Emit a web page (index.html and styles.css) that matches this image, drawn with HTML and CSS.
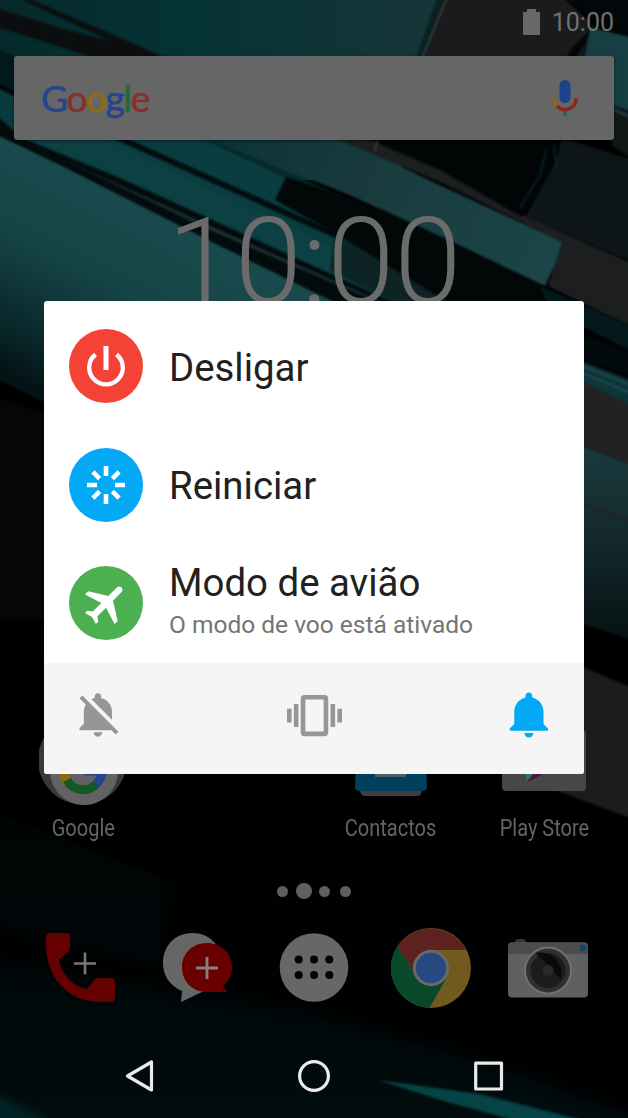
FILE: index.html
```html
<!DOCTYPE html>
<html lang="pt">
  <head>
    <meta charset="UTF-8" />
    <meta name="viewport" content="width=device-width, initial-scale=1.0" />
    <title>Menu desligar</title>
    <link rel="stylesheet" href="styles.css">
  </head>
  <body>
    <div class="phone">
      <!-- wallpaper -->
      <svg class="wallpaper" viewBox="0 0 628 1118" preserveAspectRatio="none">
        <defs>
          <linearGradient id="top" x1="0" y1="0" x2="1" y2="0">
            <stop offset="0" stop-color="#06292b" />
            <stop offset="0.4" stop-color="#053335" />
            <stop offset="1" stop-color="#173538" />
          </linearGradient>
          <linearGradient id="teal" gradientUnits="userSpaceOnUse" x1="180" y1="170" x2="60" y2="400">
            <stop offset="0" stop-color="#1b4d50" />
            <stop offset="0.5" stop-color="#174547" />
            <stop offset="0.8" stop-color="#0a2b2e" />
            <stop offset="1" stop-color="#041416" />
          </linearGradient>
          <linearGradient id="strip" gradientUnits="userSpaceOnUse" x1="220" y1="140" x2="540" y2="280">
            <stop offset="0" stop-color="#0b3437" />
            <stop offset="0.4" stop-color="#193a3d" />
            <stop offset="1" stop-color="#1b4548" />
          </linearGradient>
          <linearGradient id="right" x1="0" y1="0" x2="0" y2="1">
            <stop offset="0" stop-color="#1b3b3f" />
            <stop offset="0.5" stop-color="#14292c" />
            <stop offset="1" stop-color="#071113" />
          </linearGradient>
          <linearGradient id="low" x1="0" y1="0" x2="0" y2="1">
            <stop offset="0" stop-color="#000405" />
            <stop offset="0.6" stop-color="#000809" />
            <stop offset="1" stop-color="#000c0d" />
          </linearGradient>
          <filter id="soft" color-interpolation-filters="sRGB"><feGaussianBlur stdDeviation="1.2" /></filter>
          <filter id="softer" color-interpolation-filters="sRGB"><feGaussianBlur stdDeviation="5" /></filter>
        </defs>
        <rect width="628" height="1118" fill="#000" />
        <path d="M0 0H450L420 60L400 180H0z" fill="url(#top)" />
        <g filter="url(#soft)">
          <path d="M-5 8L60 28L110 41L22 0H32L128 41L170 60H100L-5 26z" fill="#0b0e0e" />
          <path d="M-5 48L20 58V95L-5 85z" fill="#02191b" />
          <path d="M-5 85L20 95V150L-5 120z" fill="#083a3d" />
          <path d="M-5 82L16 92V97L-5 87z" fill="#020606" />
          <path d="M20 138H210L345 200L420 330L360 320L0 130z" fill="#093d40" />
          <path d="M18 138H100L350 255V290L200 220z" fill="#0c4043" />
          <path d="M112 138H126L345 236L335 238z" fill="#020c0d" />
          <path d="M205 140H216L345 198L340 204z" fill="#06292c" />
        </g>
        <path d="M0 134L120 190L250 252L360 301L380 420H0z" fill="url(#teal)" />
        <g filter="url(#soft)">
          <path d="M-5 114L22 138L120 178L230 228L410 310H350L210 241L60 165L-5 134z" fill="#030b0c" />
          <path d="M60 158L210 226L400 310H396L210 230z" fill="#1b3335" />
          <path d="M335 236L400 262L470 305H400L330 270z" fill="#0e2324" />
          <path d="M286 177L345 196L440 235L590 310H460L340 236L275 200z" fill="#020708" />
          <path d="M210 140H345L450 190L565 243L545 286L440 236L345 193z" fill="url(#strip)" />
          <path d="M334 138H368L440 168L530 218L633 264V328L548 286L562 242L440 182z" fill="#1c1e1f" />
          <path d="M366 138H562L550 180L522 217L440 170z" fill="#010506" />
          <path d="M562 138L633 160V262L526 217L550 180z" fill="#0e1518" />
          <path d="M554 145L556 165L528 215M546 150L540 175L520 208" fill="none" stroke="#0d3236" stroke-width="1.2" />
          <path d="M378 140L374 151" stroke="#476264" stroke-width="1" />
          <path d="M445 -5H560L590 22L582 60H420z" fill="#1a1b1c" />
          <path d="M438 -5H445L424 58H416z" fill="#0b2022" />
          <path d="M446 0L423 56" stroke="#50605f" stroke-width="1" />
          <path d="M560 -5H633V38L600 24z" fill="#020809" />
          <path d="M590 27L633 38V112L612 105L584 58z" fill="#173f43" />
          <path d="M590 30L570 50L567 58H576L588 38z" fill="#020506" />
          <path d="M612 104L633 113V160L612 145z" fill="#121718" />
          <path d="M612 109L633 118" stroke="#1d4b50" stroke-width="2" />
        </g>
        <!-- right edge, beside the dialog -->
        <g filter="url(#soft)">
          <path d="M540 286L633 327V352L550 310z" fill="#04191b" />
          <path d="M570 330L633 354V377L570 355z" fill="#020a0c" />
          <path d="M570 357L633 381V406L570 382z" fill="#0f343a" />
          <path d="M570 361L633 386M570 368L633 394" stroke="#27666d" stroke-width="1" />
          <path d="M570 376L633 406V466L570 442z" fill="#222223" />
          <path d="M570 442L633 466V640L570 620z" fill="url(#right)" />
          <path d="M570 500L633 522" stroke="#231f20" stroke-width="2" />
          <path d="M570 662L633 688V819L555 790z" fill="#1c1c1d" />
          <!-- left edge -->
          <path d="M-5 385L50 412V620H-5z" fill="#050606" />
          <path d="M-5 378L50 405V416L-5 396z" fill="#000" />
        </g>
        <path d="M0 815L220 900L628 1030V1118H0z" fill="url(#low)" />
        <g filter="url(#softer)">
          <path d="M170 860L640 860V1118L480 1060L300 1010L-10 960V925L160 965z" fill="#000102" />
          <path d="M-10 1092L60 1125H-10z" fill="#002426" />
        </g>
        <path d="M378 1080L480 1094L590 1122H520L440 1100z" fill="#054346" filter="url(#soft)" />
      </svg>

      <div class="status-bar">
        <svg class="battery" viewBox="0 0 17 26">
          <path d="M0 3H4V0H13V3H17V26H0z" fill="#686868" />
        </svg>
        <span>10:00</span>
      </div>

      <div class="search">
        <div class="logo">
          <span class="blue">G</span><span class="red">o</span><span class="yellow">o</span><span class="blue">g</span><span class="green">l</span><span class="red">e</span>
        </div>
        <svg class="mic" viewBox="0 0 26 36">
          <path d="M13 30V36" stroke="#236b35" stroke-width="3.6" />
          <path d="M2 18.500A11 11 0 0 0 5.500 26.500" fill="none" stroke="#8f6c08" stroke-width="3.500" />
          <path d="M5 26A11 11 0 0 0 24 18" fill="none" stroke="#852b23" stroke-width="3.500" />
          <rect x="7.500" y="0" width="11" height="23" rx="5.500" fill="#1f428c" />
        </svg>
      </div>

      <div class="clock">10:00</div>

      <div class="apps">
        <div class="app">
          <svg viewBox="0 0 90 90">
            <circle cx="43.500" cy="45" r="44.500" fill="#393939" />
            <circle cx="45" cy="56" r="34" fill="#626262" />
            <path d="M25.500 47A18 18 0 0 0 29 67" fill="none" stroke="#8a6b0c" stroke-width="9" />
            <path d="M28 65A18 18 0 0 0 58 68" fill="none" stroke="#165727" stroke-width="9" />
            <path d="M57 69A18 18 0 0 0 63 56H45" fill="none" stroke="#20448d" stroke-width="9" />
          </svg>
          <span class="label">Google</span>
        </div>
        <div class="app"></div>
        <div class="app">
          <svg viewBox="0 0 90 90">
            <path d="M13 70H77L75 79Q74 81 71 81H19Q16 81 15 79z" fill="#3f3f3f" />
            <path d="M10 40H80L81 73Q80 76 76 76H14Q10 76 9 73z" fill="#00405d" />
            <rect x="29" y="40" width="31" height="22" fill="#4c5f66" />
          </svg>
          <span class="label">Contactos</span>
        </div>
        <div class="app">
          <svg viewBox="0 0 90 90">
            <rect x="3" y="15" width="84" height="61" rx="4" fill="#474747" />
            <path d="M27 40V68L34 59z" fill="#2b7562" />
            <path d="M27 68L34 59H44z" fill="#541344" />
          </svg>
          <span class="label">Play Store</span>
        </div>
      </div>

      <div class="pages">
        <i></i><i class="current"></i><i></i><i></i>
      </div>

      <div class="dock">
        <svg viewBox="0 0 82 82">
          <path d="M11 6H27Q31 6 31 10V20Q31 24 28 26L20 33C22 46 34 60 48 62L55 53Q57 51 61 51H72Q76 51 76 55V71Q76 75 72 75H60C26 74 7 48 7 18V10Q7 6 11 6z" fill="#640000" />
          <path d="M35 36.500H57M46 25.500V47.500" stroke="#777" stroke-width="2.600" />
        </svg>
        <svg viewBox="0 0 82 82">
          <path d="M36 6C18 6 7 20 7 36C7 49 14 59 26 64L25 75L46 65C60 62 66 50 66 36C66 19 54 6 36 6z" fill="#666" />
          <path d="M51 16C36 16 26 27 26 40C26 55 37 65 51 65H71L67 59C73 54 76 48 76 40C76 26 65 16 51 16z" fill="#690000" />
          <path d="M40 41H62M51 30V52" stroke="#858080" stroke-width="2.800" />
        </svg>
        <svg viewBox="0 0 82 82">
          <circle cx="41" cy="40.500" r="34.300" fill="#676767" />
          <g fill="#020202">
            <circle cx="25.700" cy="32.500" r="4" />
            <circle cx="41" cy="32.500" r="4" />
            <circle cx="56.300" cy="32.500" r="4" />
            <circle cx="25.700" cy="48" r="4" />
            <circle cx="41" cy="48" r="4" />
            <circle cx="56.300" cy="48" r="4" />
          </g>
        </svg>
        <svg viewBox="0 0 82 82">
          <circle cx="41" cy="41" r="40" fill="#715a20" />
          <path d="M7.500 19A40 40 0 0 0 39.500 81L57 50L41 41L24 45z" fill="#09482a" />
          <path d="M7.500 19A40 40 0 0 1 76 23H41L24 45z" fill="#5e221e" />
          <circle cx="41" cy="41" r="18.200" fill="#696969" />
          <circle cx="41" cy="41" r="15.200" fill="#284881" />
        </svg>
        <svg viewBox="0 0 82 82">
          <rect x="8" y="12" width="11" height="10" rx="3" fill="#343434" />
          <rect x="1" y="15.500" width="80" height="55" rx="4" fill="#606060" />
          <path d="M1 27V19.500Q1 15.500 5 15.500H77Q81 15.500 81 19.500V27z" fill="#4c4c4c" />
          <circle cx="41" cy="43.500" r="24" fill="#717171" />
          <circle cx="41" cy="43.500" r="22" fill="#303030" />
          <circle cx="41" cy="43.500" r="17.500" fill="#1c1c1c" />
          <path d="M28.500 26A21.500 21.500 0 0 1 54 52z" fill="#0a0a0a" />
          <circle cx="41" cy="43.500" r="5.500" fill="#292929" />
          <circle cx="75.500" cy="21" r="3.300" fill="#074c6c" />
        </svg>
      </div>

      <div class="nav">
        <svg viewBox="0 0 36 36">
          <path d="M5.500 18L29.500 4V32z" />
        </svg>
        <svg viewBox="0 0 36 36">
          <circle cx="18" cy="18" r="14.400" />
        </svg>
        <svg viewBox="0 0 36 36">
          <rect x="5.700" y="5.200" width="25.800" height="25.800" />
        </svg>
      </div>

      <!-- power menu -->
      <div class="dialog">
        <div class="option">
          <svg class="round off" viewBox="0 0 74 74">
            <path d="M26.500 25.500A16.800 16.800 0 1 0 47.500 25.500" fill="none" stroke="#fff" stroke-width="4.300" />
            <path d="M37 17V41" stroke="#fff" stroke-width="5" />
          </svg>
          <div class="name">Desligar</div>
        </div>
        <div class="option">
          <svg class="round restart" viewBox="0 0 74 74">
            <path d="M37 18V28M37 46V56M18 37H28M46 37H56M23.900 23.900L30.600 30.600M43.400 43.400L50.100 50.100M23.900 50.100L30.600 43.400M43.400 30.600L50.100 23.900" stroke="#fff" stroke-width="4.600" />
          </svg>
          <div class="name">Reiniciar</div>
        </div>
        <div class="option">
          <svg class="round plane" viewBox="0 0 74 74">
            <path transform="translate(37 37) rotate(45) scale(2.2) translate(-11.500 -12)" d="M21 16v-2l-8-5V3.500c0-.83-.67-1.500-1.500-1.500S10 2.670 10 3.500V9l-8 5v2l8-2.500V19l-2 1.500V22l3.500-1 3.500 1v-1.500L13 19v-5.500l8 2.500z" fill="#fff" />
          </svg>
          <div class="text">
            <div class="name">Modo de avião</div>
            <div class="state">O modo de voo está ativado</div>
          </div>
        </div>
        <div class="sound">
          <svg class="silent" viewBox="0 0 24 24">
            <path d="M11.500 22c1.100 0 2-.9 2-2h-4c0 1.100.9 2 2 2zM18 10.500c0-3.070-2.130-5.640-5-6.320V3.500c0-.83-.67-1.500-1.500-1.500S10 2.670 10 3.500v.68c-.51.12-.99.32-1.450.56L18 14.180V10.500zm-.27 8.500l2 2L21 19.730 4.270 3 3 4.270l2.920 2.920C5.340 8.160 5 9.290 5 10.500V16l-2 2v1h14.730z" />
          </svg>
          <svg class="vibrate" viewBox="0 0 24 24">
            <path d="M0 15h2V9H0v6zm3 2h2V7H3v10zm19-8v6h2V9h-2zm-3 8h2V7h-2v10zM16.500 3h-9C6.670 3 6 3.670 6 4.500v15c0 .83.67 1.500 1.500 1.500h9c.83 0 1.500-.67 1.500-1.500v-15c0-.83-.67-1.500-1.500-1.500zM16 19H8V5h8v14z" />
          </svg>
          <svg class="ring" viewBox="0 0 24 24">
            <path d="M11.500 22c1.100 0 2-.9 2-2h-4c0 1.100.9 2 2 2zm6.500-6v-5.500c0-3.070-2.130-5.640-5-6.320V3.500c0-.83-.67-1.500-1.500-1.500S10 2.670 10 3.500v.68c-2.870.68-5 3.250-5 6.320V16l-2 2v1h17v-1l-2-2z" />
          </svg>
        </div>
      </div>
    </div>
  </body>
</html>
```
FILE: styles.css
```css
body {
  margin: 0;
  background-color: #000;
  font-family: Roboto, "Liberation Sans", sans-serif;
}
svg {
  display: block;
  flex: none;
}
.phone {
  position: relative;
  display: flex;
  flex-direction: column;
  width: 628px;
  height: 1118px;
  overflow: hidden;
  isolation: isolate;
}
.wallpaper {
  position: absolute;
  top: 0;
  left: 0;
  width: 628px;
  height: 1118px;
  z-index: -1;
}
.status-bar {
  display: flex;
  justify-content: flex-end;
  align-items: center;
  gap: 12px;
  box-sizing: border-box;
  height: 56px;
  padding: 0 14px 12px 0;
  color: #707070;
  font-size: 25px;
}
.battery {
  width: 17px;
  height: 26px;
}
.search {
  display: flex;
  justify-content: space-between;
  align-items: center;
  box-sizing: border-box;
  height: 84px;
  margin: 0 14px;
  padding: 0 36px 0 27px;
  background-color: #666;
  border-radius: 3px;
  box-shadow: 0 1px 3px rgba(0, 0, 0, 0.5);
}
.logo {
  font-family: Lato, sans-serif;
  font-size: 37px;
  line-height: 44px;
  letter-spacing: -1.4px;
  -webkit-text-stroke-width: 0.6px;
}
.blue {
  color: #25468c;
}
.red {
  color: #87302a;
}
.yellow {
  color: #8f6d0c;
}
.green {
  color: #236b35;
}
.mic {
  width: 26px;
  height: 36px;
}
.clock {
  box-sizing: border-box;
  height: 575px;
  padding: 51px 0 0 1px;
  color: #6b6b6b;
  font-size: 121px;
  font-weight: 300;
  line-height: 142px;
  text-align: center;
}
.apps {
  display: grid;
  grid-template-columns: repeat(4, 1fr);
  height: 165px;
  padding: 0 7px;
}
.app {
  display: flex;
  flex-direction: column;
  align-items: center;
}
.app svg {
  width: 90px;
  height: 90px;
}
.label {
  margin-top: 10px;
  color: #646464;
  font-size: 23px;
  line-height: 27px;
  white-space: nowrap;
  transform: scaleX(0.87);
}
.pages {
  display: flex;
  justify-content: center;
  align-items: center;
  gap: 9.5px;
  height: 22px;
}
.pages i {
  width: 11px;
  height: 11px;
  border-radius: 50%;
  background-color: #5f5f5f;
}
.pages .current {
  width: 16px;
  height: 16px;
  margin: 0 -2px;
}
.dock {
  display: grid;
  grid-template-columns: repeat(5, 1fr);
  justify-items: center;
  padding: 25px 22px 0;
}
.dock svg {
  width: 82px;
  height: 82px;
}
.nav {
  display: flex;
  justify-content: center;
  gap: 138px;
  margin-top: 49px;
}
.nav svg {
  width: 36px;
  height: 36px;
  fill: none;
  stroke: #ebebeb;
  stroke-width: 3.2;
  stroke-linejoin: round;
}
.dialog {
  position: absolute;
  top: 301px;
  left: 44px;
  box-sizing: border-box;
  width: 540px;
  height: 473px;
  padding-top: 6px;
  overflow: hidden;
  background-color: #fff;
  border-radius: 3px;
}
.option {
  display: flex;
  align-items: center;
  gap: 26px;
  box-sizing: border-box;
  height: 118.6px;
  padding-left: 25px;
}
.round {
  width: 74px;
  height: 74px;
  border-radius: 50%;
}
.off {
  background-color: #f44336;
}
.restart {
  background-color: #03a9f4;
}
.plane {
  background-color: #4caf50;
}
.name {
  padding-top: 3px;
  color: #212121;
  font-size: 38.4px;
  line-height: 44px;
}
.text .name {
  padding: 0 0 2px;
}
.state {
  padding-bottom: 2px;
  color: #757575;
  font-size: 24.5px;
  line-height: 36px;
}
.sound {
  display: flex;
  justify-content: space-between;
  box-sizing: border-box;
  height: 112px;
  padding: 25px 27px 0 29px;
  background-color: #f5f5f5;
}
.silent,
.vibrate {
  fill: #969696;
}
.silent {
  width: 52px;
  height: 52px;
  margin-top: 1px;
}
.vibrate {
  width: 55px;
  height: 55px;
}
.ring {
  width: 54px;
  height: 54px;
  fill: #03a9f4;
}
```
